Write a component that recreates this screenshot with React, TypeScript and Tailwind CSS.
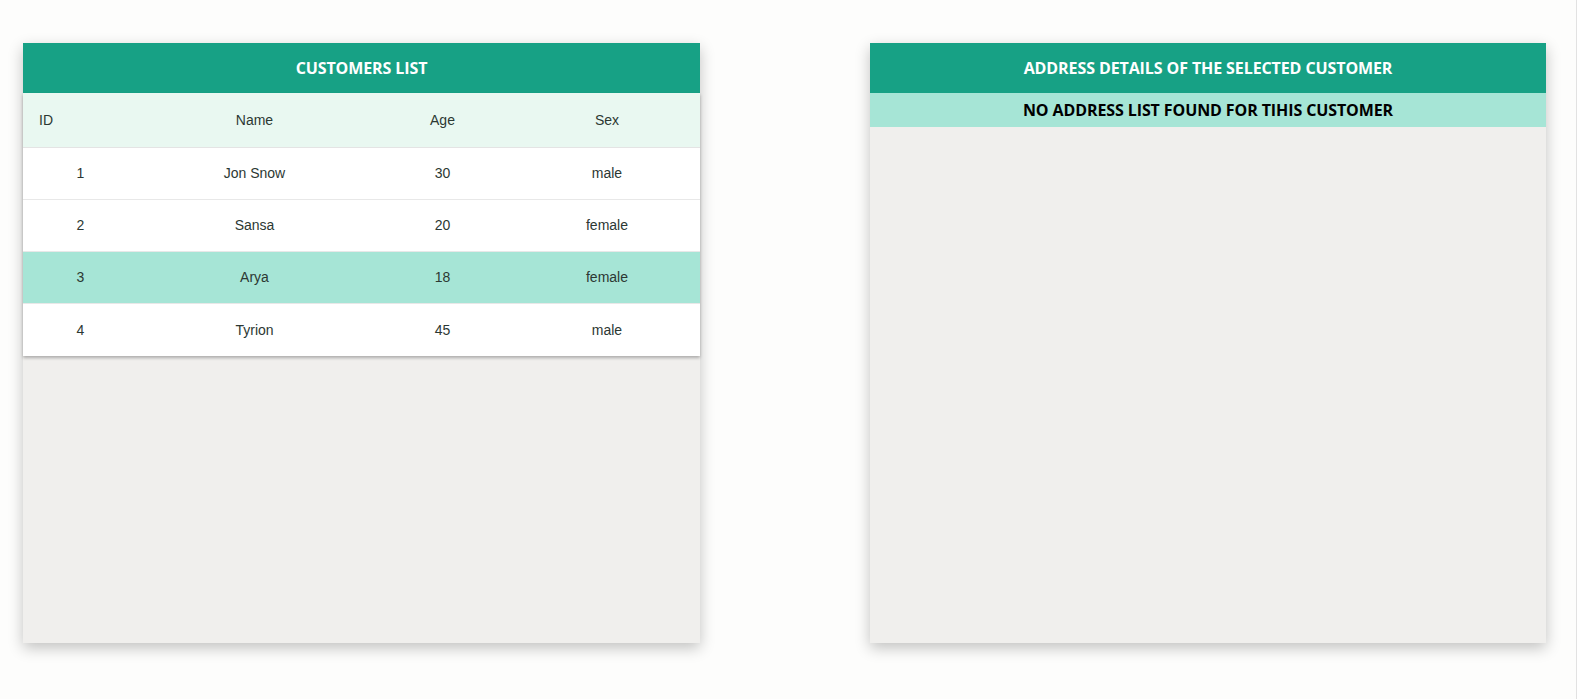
const customers = [
  { id: 1, name: 'Jon Snow', age: 30, sex: 'male' },
  { id: 2, name: 'Sansa', age: 20, sex: 'female' },
  { id: 3, name: 'Arya', age: 18, sex: 'female' },
  { id: 4, name: 'Tyrion', age: 45, sex: 'male' },
]

const selectedId = 3

function PanelTitle({ children }: { children: React.ReactNode }) {
  return (
    <div className="h-[50px] bg-[#17a185] flex items-center justify-center font-['Open_Sans',sans-serif] font-bold text-[16px] text-white tracking-[-0.1px]">
      {children}
    </div>
  )
}

function CustomersTable() {
  return (
    <div className="bg-white shadow-[0_2px_3px_rgba(0,0,0,0.28)] font-['Liberation_Sans',Arial,sans-serif] text-[14px] text-[#2c3833]">
      <div className="grid grid-cols-[115px_233px_143px_186px] h-[55px] items-center bg-[#e9f8f1] border-b border-[#e4e4e4]">
        <div className="pl-4">ID</div>
        <div className="text-center">Name</div>
        <div className="text-center">Age</div>
        <div className="text-center">Sex</div>
      </div>
      {customers.map((c, i) => (
        <div
          key={c.id}
          className={
            'grid grid-cols-[115px_233px_143px_186px] h-[52px] items-center ' +
            (i < customers.length - 1 ? 'border-b border-[#e8e8e8] ' : '') +
            (c.id === selectedId ? 'bg-[#a6e5d6]' : 'bg-white')
          }
        >
          <div className="text-center">{c.id}</div>
          <div className="text-center">{c.name}</div>
          <div className="text-center">{c.age}</div>
          <div className="text-center">{c.sex}</div>
        </div>
      ))}
    </div>
  )
}

export default function App() {
  return (
    <div className="min-h-[699px] bg-[#fdfdfc] border-r border-[#e2e2e2] flex gap-[170px] pl-[23px] pt-[43px]">
      <div className="w-[677px] h-[600px] bg-[#f0efed] shadow-[0_5px_14px_rgba(0,0,0,0.24)] flex flex-col">
        <PanelTitle>CUSTOMERS LIST</PanelTitle>
        <CustomersTable />
      </div>
      <div className="w-[676px] h-[600px] bg-[#f0efed] shadow-[0_5px_14px_rgba(0,0,0,0.24)] flex flex-col">
        <PanelTitle>ADDRESS DETAILS OF THE SELECTED CUSTOMER</PanelTitle>
        <div className="h-[34px] bg-[#a6e5d6] flex items-center justify-center font-['Open_Sans',sans-serif] font-bold text-[16px] text-black tracking-[-0.1px]">
          NO ADDRESS LIST FOUND FOR TIHIS CUSTOMER
        </div>
      </div>
    </div>
  )
}
